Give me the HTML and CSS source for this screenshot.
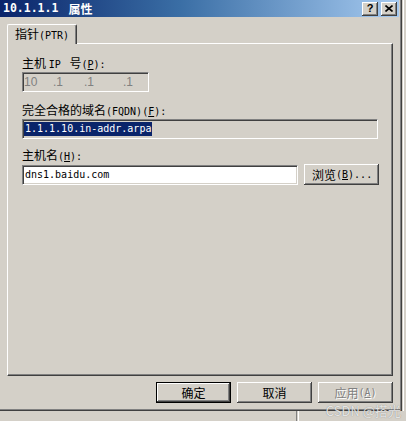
FILE: index.html
```html
<!DOCTYPE html>
<html lang="zh">
<head>
<meta charset="utf-8">
<title>10.1.1.1 属性</title>
<link rel="stylesheet" href="styles.css">
</head>
<body>
<div class="screen">
  <div class="win">
    <div class="title">
      <span class="ttext"><span class="tm">10.1.1.1</span><span class="tsp"></span>属性</span>
      <div class="tbtns">
        <span class="tb help">?</span>
        <span class="tb close">
          <svg width="8" height="7" viewBox="0 0 8 7"><path d="M0.5 0.5 L7.5 6.5 M7.5 0.5 L0.5 6.5" stroke="#000" stroke-width="1.6" fill="none"/></svg>
        </span>
      </div>
    </div>
    <div class="main">
      <div class="tabs"><div class="tab">指针<span class="m">(PTR)</span></div></div>
      <div class="panel">
        <div class="lbl l1">主机 <span class="m">IP </span> 号<span class="m">(<u>P</u>):</span></div>
        <div class="field ip">
          <span class="o o1">10</span><span class="o o2">.1</span><span class="o o3">.1</span><span class="o o4">.1</span>
        </div>
        <div class="lbl l2">完全合格的域名<span class="m">(FQDN)(<u>F</u>):</span></div>
        <div class="field fqdn"><span class="sel m">1.1.1.10.in-addr.arpa</span></div>
        <div class="lbl l3">主机名<span class="m">(<u>H</u>):</span></div>
        <div class="row">
          <div class="field host"><span class="m">dns1.baidu.com</span></div>
          <div class="btn browse">浏览<span class="m">(<u>B</u>)...</span></div>
        </div>
      </div>
      <div class="btnrow">
        <div class="btn def">确定</div>
        <div class="btn">取消</div>
        <div class="btn dis">应用<span class="m">(<u>A</u>)</span></div>
      </div>
    </div>
  </div>
  <div class="side"></div>
  <div class="below"></div>
  <div class="wm">CSDN @搭光</div>
</div>
</body>
</html>
```

FILE: styles.css
```css
html, body {
  margin: 0;
  padding: 0;
  background: #d4d0c8;
}
body {
  width: 406px;
  height: 421px;
  overflow: hidden;
  font-family: "Noto Sans CJK SC", "Noto Sans", sans-serif;
  font-size: 12px;
  color: #000;
}
.screen {
  position: relative;
  display: grid;
  grid-template-columns: 402px 4px;
  grid-template-rows: 411px 10px;
  width: 406px;
  height: 421px;
}
.m {
  font-family: "DejaVu Sans Mono", "Liberation Mono", monospace;
  font-size: 10px;
}
.win {
  box-sizing: border-box;
  width: 402px;
  height: 411px;
  background: #d4d0c8;
  border-right: 1px solid #404040;
  border-bottom: 1px solid #404040;
  box-shadow: inset -1px -1px #808080;
  padding-right: 2px;
}
.title {
  height: 17px;
  width: 399px;
  box-sizing: border-box;
  background: linear-gradient(90deg, #0a246a 0%, #3a6ea5 45%, #a6caf0 100%);
  display: flex;
  align-items: center;
  justify-content: space-between;
  padding: 0 2px 0 3px;
  color: #fff;
  font-weight: bold;
}
.ttext {
  display: flex;
  align-items: center;
  font-size: 12px;
  line-height: 17px;
  white-space: pre;
}
.tm {
  font-family: "DejaVu Sans Mono", monospace;
  font-size: 11.5px;
  font-weight: bold;
}
.tsp {
  display: inline-block;
  width: 10px;
}
.tbtns {
  display: flex;
  gap: 3px;
}
.tb {
  box-sizing: border-box;
  width: 16px;
  height: 14px;
  background: #d4d0c8;
  box-shadow: inset -1px -1px #404040, inset 1px 1px #fff, inset -2px -2px #808080;
  display: flex;
  align-items: center;
  justify-content: center;
  color: #000;
  font-family: "Liberation Sans", sans-serif;
  font-size: 11px;
  font-weight: bold;
  line-height: 14px;
}
.tb.help {
  padding-bottom: 1px;
}
.main {
  padding: 7px 0 0 7px;
}
.tabs {
  display: flex;
  height: 20px;
  position: relative;
  z-index: 1;
  margin-bottom: -1px;
}
.tab {
  box-sizing: border-box;
  width: 70px;
  height: 20px;
  background: #d4d0c8;
  border-top: 1px solid #fff;
  border-left: 1px solid #fff;
  border-right: 1px solid #404040;
  border-top-left-radius: 2px;
  border-top-right-radius: 2px;
  box-shadow: inset -1px 0 #808080;
  padding: 2px 0 0 7px;
  line-height: 14px;
  white-space: nowrap;
}
.panel {
  box-sizing: border-box;
  width: 386px;
  height: 333px;
  border-top: 1px solid #fff;
  border-left: 1px solid #fff;
  border-right: 1px solid #404040;
  border-bottom: 1px solid #404040;
  box-shadow: inset -1px -1px #808080;
  padding: 12px 0 0 14px;
}
.lbl {
  height: 13px;
  line-height: 13px;
  margin-bottom: 3px;
  white-space: pre;
}
.lbl.l2 { margin-top: 11px; }
.lbl.l3 { margin-top: 9px; }
.field {
  box-sizing: border-box;
  height: 20px;
  border: 1px solid;
  border-color: #808080 #fff #fff #808080;
  box-shadow: inset 1px 1px #404040, inset -1px -1px #d4d0c8;
  display: flex;
  align-items: center;
  background: #d4d0c8;
  white-space: pre;
}
.field.ip {
  width: 127px;
  padding-left: 1px;
  color: #808080;
  font-family: "Liberation Sans", sans-serif;
  font-size: 12px;
}
.o { display: inline-block; }
.o1 { width: 29px; }
.o2 { width: 31px; }
.o3 { width: 39px; }
.o4 { width: 20px; }
.field.fqdn {
  width: 356px;
  padding-left: 1px;
}
.sel {
  background: #0a246a;
  color: #fff;
  line-height: 14px;
  padding: 0 1px;
}
.row {
  display: flex;
  align-items: center;
  gap: 6px;
}
.field.host {
  width: 276px;
  background: #fff;
  padding-left: 2px;
}
.btn {
  box-sizing: border-box;
  width: 75px;
  height: 21px;
  background: #d4d0c8;
  box-shadow: inset -1px -1px #404040, inset 1px 1px #fff, inset -2px -2px #808080;
  display: flex;
  align-items: center;
  justify-content: center;
  white-space: pre;
}
.btn.browse {
  height: 21px;
  justify-content: flex-start;
  padding-left: 8px;
}
.btnrow {
  width: 386px;
  display: flex;
  justify-content: flex-end;
  gap: 6px;
  margin-top: 6px;
}
.btn.def {
  border: 1px solid #000;
  box-shadow: inset -1px -1px #404040, inset 1px 1px #fff, inset -2px -2px #808080;
}
.btn.dis {
  color: #808080;
  text-shadow: 1px 1px #fff;
}
.side {
  box-shadow: inset 1px 0 #d4d0c8, inset 2px 0 #fff;
}
.below {
  grid-column: 1 / 3;
  box-sizing: border-box;
  padding-left: 296px;
}
.below::before {
  content: "";
  display: block;
  width: 1px;
  height: 10px;
  border-left: 1px solid #808080;
  border-right: 1px solid #fff;
}
.wm {
  position: absolute;
  right: 5px;
  top: 404px;
  font-family: "Noto Sans CJK SC", "Liberation Sans", sans-serif;
  font-size: 13px;
  line-height: 14px;
  color: rgba(255, 255, 255, 0.8);
  text-shadow: 0 0 1px rgba(80, 80, 80, 0.7);
}
```
